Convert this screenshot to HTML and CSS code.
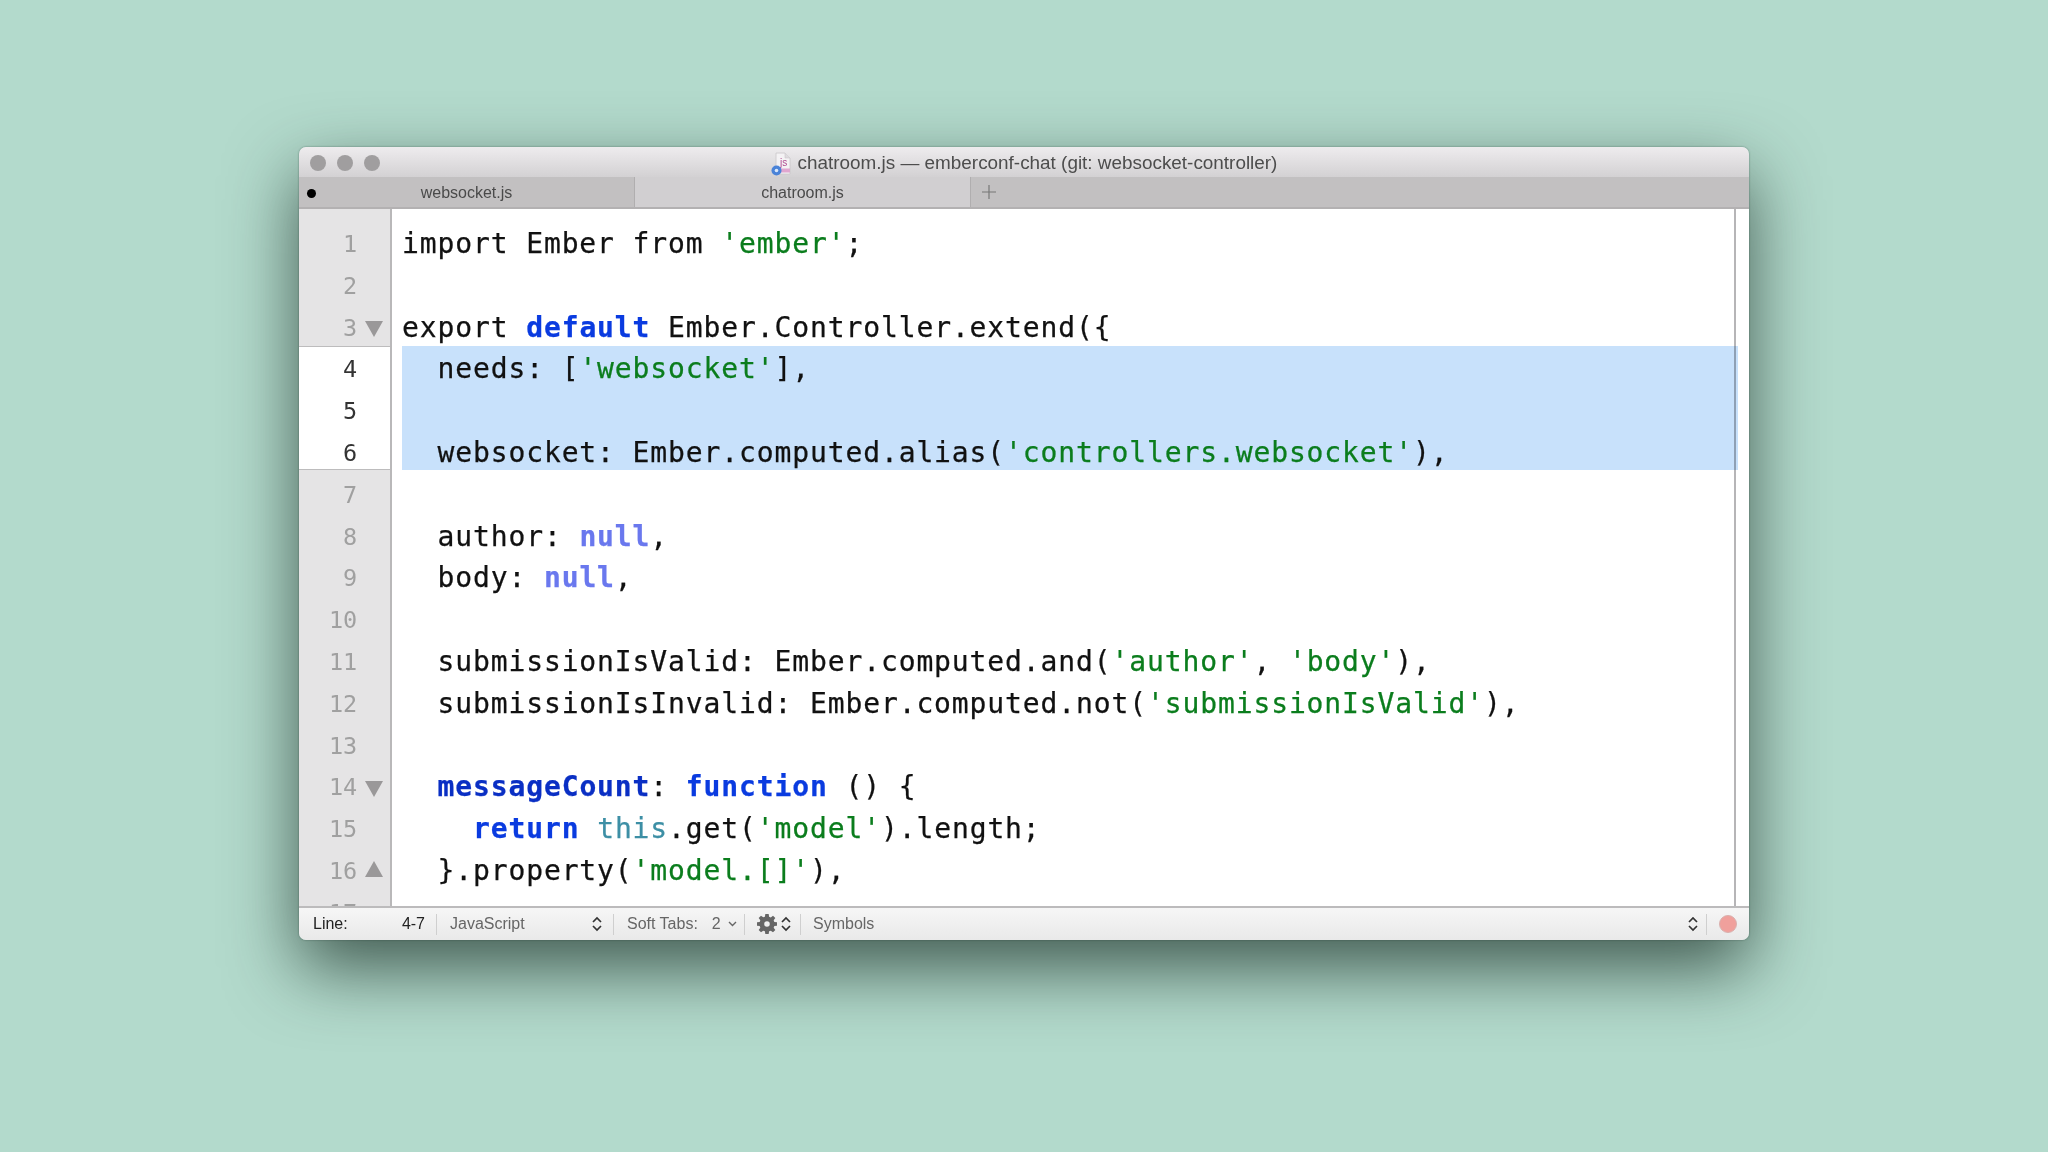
FILE: index.html
```html
<!DOCTYPE html>
<html lang="en">
<head>
<meta charset="utf-8">
<title>chatroom.js</title>
<link rel="stylesheet" href="styles.css">
</head>
<body>
<main class="window">
  <header class="titlebar">
    <div class="lights"><i class="light"></i><i class="light"></i><i class="light"></i></div>
    <div class="title">
      <svg class="file-icon" width="20" height="24" viewBox="0 0 20 24"><path d="M5 1h9l5 5v16H5z" fill="#f4f2f4" stroke="#c9c6c9" stroke-width=".8"/><path d="M14 1v5h5" fill="#dedbde" stroke="#c9c6c9" stroke-width=".6"/><rect x="8" y="16.500" width="11" height="4" fill="#e0a6cf"/><text x="9" y="14" class="file-js">js</text><circle cx="5.500" cy="18.500" r="5" fill="#4a83d8"/><circle cx="5.500" cy="18.500" r="1.800" fill="#dbe8fa"/></svg>
      <span>chatroom.js — emberconf-chat (git: websocket-controller)</span>
    </div>
  </header>
  <nav class="tabs">
    <div class="tab tab-back"><i class="dirty"></i><span>websocket.js</span></div>
    <div class="tab tab-active"><span>chatroom.js</span></div>
    <div class="tab-add"><svg width="16" height="16" viewBox="0 0 16 16"><path d="M8 1v14M1 8h14" stroke="#777" stroke-width="1.2"/></svg></div>
  </nav>
  <section class="editor">
    <div class="gutter">
      <div class="num"><span>1</span><b class="fold"></b></div>
      <div class="num"><span>2</span><b class="fold"></b></div>
      <div class="num"><span>3</span><b class="fold"><svg width="18" height="16" viewBox="0 0 18 16"><path d="M0 0h18L9 16z"/></svg></b></div>
      <div class="sel-nums">
        <div class="num cur"><span>4</span><b class="fold"></b></div>
        <div class="num cur"><span>5</span><b class="fold"></b></div>
        <div class="num cur"><span>6</span><b class="fold"></b></div>
      </div>
      <div class="num"><span>7</span><b class="fold"></b></div>
      <div class="num"><span>8</span><b class="fold"></b></div>
      <div class="num"><span>9</span><b class="fold"></b></div>
      <div class="num"><span>10</span><b class="fold"></b></div>
      <div class="num"><span>11</span><b class="fold"></b></div>
      <div class="num"><span>12</span><b class="fold"></b></div>
      <div class="num"><span>13</span><b class="fold"></b></div>
      <div class="num"><span>14</span><b class="fold"><svg width="18" height="16" viewBox="0 0 18 16"><path d="M0 0h18L9 16z"/></svg></b></div>
      <div class="num"><span>15</span><b class="fold"></b></div>
      <div class="num"><span>16</span><b class="fold fold-up"><svg width="18" height="16" viewBox="0 0 18 16"><path d="M0 16h18L9 0z"/></svg></b></div>
      <div class="num"><span>17</span><b class="fold"></b></div>
    </div>
    <div class="code">
      <div class="guide"></div>
      <div class="ln">import Ember from <span class="s">'ember'</span>;</div>
      <div class="ln"> </div>
      <div class="ln">export <span class="k">default</span> Ember.Controller.extend({</div>
      <div class="sel">
        <div class="ln">  needs: [<span class="s">'websocket'</span>],</div>
        <div class="ln"> </div>
        <div class="ln">  websocket: Ember.computed.alias(<span class="s">'controllers.websocket'</span>),</div>
      </div>
      <div class="ln"> </div>
      <div class="ln">  author: <span class="n">null</span>,</div>
      <div class="ln">  body: <span class="n">null</span>,</div>
      <div class="ln"> </div>
      <div class="ln">  submissionIsValid: Ember.computed.and(<span class="s">'author'</span>, <span class="s">'body'</span>),</div>
      <div class="ln">  submissionIsInvalid: Ember.computed.not(<span class="s">'submissionIsValid'</span>),</div>
      <div class="ln"> </div>
      <div class="ln">  <span class="f">messageCount</span>: <span class="k">function</span> () {</div>
      <div class="ln">    <span class="k">return</span> <span class="t">this</span>.get(<span class="s">'model'</span>).length;</div>
      <div class="ln">  }.property(<span class="s">'model.[]'</span>),</div>
    </div>
  </section>
  <footer class="status">
    <div class="cell cell-line"><span class="dark">Line:</span><span class="dark">4-7</span></div>
    <div class="cell cell-lang"><span>JavaScript</span><svg class="updown" width="10" height="16" viewBox="0 0 10 16"><path d="M1 6l4-4 4 4M1 10l4 4 4-4"/></svg></div>
    <div class="cell cell-tabs"><span>Soft Tabs:</span><span class="tabsize">2</span><svg class="chev" width="9" height="6" viewBox="0 0 9 6"><path d="M1 1l3.500 3.500L8 1"/></svg></div>
    <div class="cell cell-gear">
      <svg width="20" height="20" viewBox="0 0 18 18"><path fill="#666" fill-rule="evenodd" d="M7.500 0h3l.4 2.500 1.500.6 2-1.500 2.100 2.100-1.500 2 .6 1.500L18 7.500v3l-2.400.4-.6 1.500 1.500 2-2.100 2.100-2-1.500-1.500.6-.4 2.400h-3l-.4-2.400-1.500-.6-2 1.500-2.100-2.100 1.500-2-.6-1.500L0 10.500v-3l2.400-.4.6-1.500-1.500-2L3.600 1.500l2 1.500 1.500-.6zM9 6.500a2.500 2.500 0 1 0 0 5 2.500 2.500 0 0 0 0-5z"/></svg>
      <svg class="updown" width="10" height="16" viewBox="0 0 10 16"><path d="M1 6l4-4 4 4M1 10l4 4 4-4"/></svg>
    </div>
    <div class="cell cell-symbols"><span>Symbols</span><svg class="updown" width="10" height="16" viewBox="0 0 10 16"><path d="M1 6l4-4 4 4M1 10l4 4 4-4"/></svg></div>
    <div class="cell cell-rec"><i class="rec"></i></div>
  </footer>
</main>
</body>
</html>
```
FILE: styles.css
```css
html, body { margin: 0; height: 100%; }
body {
  background: #b3dacc;
  display: flex;
  justify-content: center;
  align-items: flex-start;
  padding-top: 147px;
  box-sizing: border-box;
  overflow: hidden;
  font-family: "Liberation Sans", Arial, sans-serif;
}
.window {
  width: 1450px;
  height: 793px;
  border-radius: 7px;
  overflow: hidden;
  display: flex;
  flex-direction: column;
  box-shadow: 0 28px 70px rgba(25, 45, 38, .75), 0 0 2px rgba(40, 70, 60, .6);
}
.titlebar {
  height: 30px;
  flex: none;
  background: linear-gradient(#eeecee, #d3d1d3);
  position: relative;
  display: flex;
  align-items: center;
  justify-content: center;
}
.lights { position: absolute; left: 11px; top: 8px; display: flex; gap: 11px; }
.light { width: 16px; height: 16px; border-radius: 50%; background: #a09e9f; display: block; }
.title { display: flex; align-items: center; gap: 7px; font-size: 18.9px; color: #4d4d4d; margin-top: 2px; }
.file-icon { display: block; margin-top: 2px; }
.file-js { font-size: 10px; fill: #b04a90; font-family: "Liberation Sans", sans-serif; }
.tabs {
  height: 30px;
  flex: none;
  display: flex;
  background: #c2c0c1;
  border-bottom: 2px solid #b3b1b2;
  font-size: 16px;
  color: #4a4a4a;
}
.tab { width: 336px; display: flex; align-items: center; justify-content: center; position: relative; box-sizing: border-box; border-right: 1px solid #b0aeaf; }
.tab span { margin-top: 2px; }
.tab-active { background: #d1cfd1; }
.dirty { position: absolute; left: 8px; top: 12px; width: 9px; height: 9px; border-radius: 50%; background: #000; }
.tab-add { width: 36px; display: flex; align-items: center; justify-content: center; }
.editor { flex: 1; min-height: 0; display: flex; background: #fff; overflow: hidden; }
.gutter {
  width: 91px;
  flex: none;
  background: #e5e4e5;
  border-right: 2px solid #b9b8b9;
  padding-top: 14px;
  font: 23.500px/41.8px "DejaVu Sans Mono", monospace;
  color: #a0a0a0;
}
.num { height: 41.8px; display: flex; justify-content: flex-end; }
.num span { display: block; letter-spacing: -.2px; margin-top: 1px; }
.fold { width: 33px; display: flex; align-items: center; justify-content: center; padding-top: 4px; box-sizing: border-box; }
.fold svg { fill: #9a9899; display: block; }
.fold-up { padding-top: 0; padding-bottom: 4px; }
.sel-nums {
  background: #fff;
  color: #333;
  box-sizing: border-box;
  height: 124px;
  padding-top: 1.400px;
  margin: -2.400px 0 3.800px;
  border-top: 1px solid #bdbcbd;
  border-bottom: 1px solid #bdbcbd;
}
.code {
  flex: 1;
  position: relative;
  padding: 14px 11px 0 11px;
  font: 28px/41.8px "DejaVu Sans Mono", monospace;
  letter-spacing: .88px;
  -webkit-text-stroke: .25px;
  color: #111;
  box-sizing: border-box;
  min-width: 0;
}
.ln { height: 41.8px; white-space: pre; margin-left: -1px; }
.sel { background: #c8e1fb; box-sizing: border-box; height: 124px; padding-top: 2.400px; margin: -2.400px 0 3.800px -1px; }
.sel .ln { margin-left: 0; }
.guide { position: absolute; right: 13px; top: 0; bottom: 0; width: 2px; background: #b6b5b7; mix-blend-mode: multiply; }
.k { color: #0a3be0; font-weight: bold; }
.f { color: #0a2fc4; font-weight: bold; }
.s { color: #0b7d1d; }
.n { color: #6a78ee; font-weight: bold; }
.t { color: #3d8fa5; }
.status {
  height: 32px;
  flex: none;
  display: flex;
  align-items: center;
  border-top: 2px solid #bcbbbc;
  background: linear-gradient(#f6f6f6, #e9e9e9);
  font-size: 16px;
  color: #666;
}
.dark { color: #222; }
.cell { height: 21px; display: flex; align-items: center; box-sizing: border-box; border-right: 1px solid #cfcfcf; }
.cell-line { width: 138px; padding: 0 11px 0 14px; justify-content: space-between; }
.cell-lang { width: 177px; padding: 0 11px 0 13px; justify-content: space-between; }
.cell-tabs { width: 131px; padding-left: 13px; }
.tabsize { margin-left: 14px; }
.chev { margin-left: 7px; fill: none; stroke: #666; stroke-width: 1.4; }
.cell-gear { width: 56px; padding-left: 12px; gap: 4px; }
.cell-symbols { flex: 1; padding: 0 8px 0 12px; justify-content: space-between; }
.cell-rec { width: 42px; border-right: 0; justify-content: center; }
.updown { fill: none; stroke: #333; stroke-width: 1.7; flex: none; }
.rec { width: 18px; height: 18px; border-radius: 50%; background: #f0a09c; border: 1px solid #d9b0ae; box-sizing: border-box; }
```
